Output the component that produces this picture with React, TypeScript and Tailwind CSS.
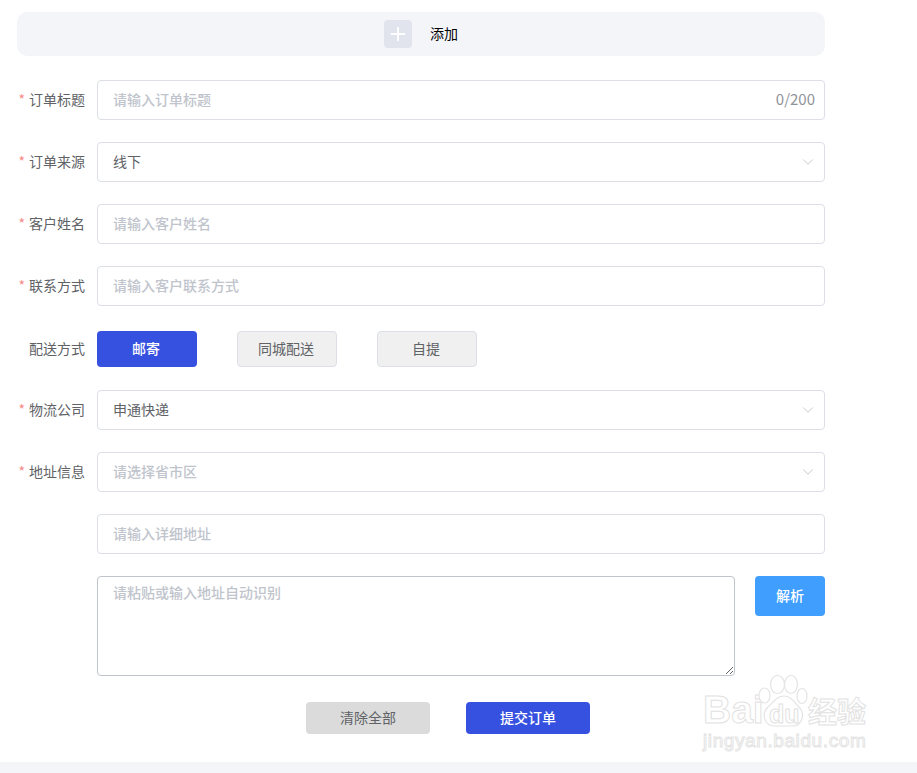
import { ChevronDown, Plus } from "lucide-react";
import type { ReactNode } from "react";

const cjk = "font-['Microsoft_YaHei','Noto_Sans_CJK_SC','Noto_Sans',sans-serif]";

function Row({ label, required, className, children }: { label?: string; required?: boolean; className?: string; children: ReactNode }) {
    return (
        <div className={`flex items-center ${className ?? ""}`}>
            <label className="w-[68px] shrink-0 text-right text-sm leading-5 text-[#606266] mr-3 pb-0.5">
                {required && <span className="text-[#f78989] mr-1">*</span>}
                {label}
            </label>
            {children}
        </div>
    );
}

function TextInput({ placeholder, suffix }: { placeholder: string; suffix?: string }) {
    return (
        <div className="flex-1 h-10 flex items-center rounded border border-[#dcdfe6] bg-white pl-[15px] pr-[9px] pb-0.5">
            <input
                placeholder={placeholder}
                className="flex-1 min-w-0 bg-transparent text-sm text-[#606266] outline-none placeholder:text-[#c0c4cc] placeholder:font-medium"
            />
            {suffix && <span className="text-[15px] text-[#909399]">{suffix}</span>}
        </div>
    );
}

function SelectBox({ value, placeholder }: { value?: string; placeholder?: string }) {
    return (
        <div className="flex-1 h-10 flex items-center justify-between rounded border border-[#dcdfe6] bg-white pl-[15px] pr-[7px]">
            <span className={`text-sm pb-0.5 ${value ? "text-[#606266]" : "font-medium text-[#c0c4cc]"}`}>{value ?? placeholder}</span>
            <ChevronDown className="w-[18px] h-[18px] text-[#c0c4cc]" strokeWidth={1.2} />
        </div>
    );
}

function Watermark() {
    return (
        <div className="absolute left-[702px] top-[672px] w-[170px] h-[82px] select-none pointer-events-none">
            <span className="absolute left-[1px] top-[15px] text-[39px] leading-[46px] font-bold font-['Liberation_Sans',sans-serif] text-white [-webkit-text-stroke:1px_#e2e2e2]">Bai</span>
            <svg className="absolute left-[56px] top-[3px]" width="52" height="54" viewBox="0 0 52 54" fill="white" stroke="#e4e4e4" strokeWidth="1.2">
                <ellipse cx="19.5" cy="9.5" rx="7" ry="9" />
                <ellipse cx="33" cy="9.5" rx="6.5" ry="9" />
                <ellipse cx="6.5" cy="20.5" rx="5.5" ry="7.5" />
                <ellipse cx="44" cy="21" rx="5" ry="7.5" />
                <path d="M26 21c7 0 10 6 15 11 6 6 4 19-7 19H17C6 51 3 39 10 32c6-5 8-11 16-11z" />
            </svg>
            <span className="absolute left-[67px] top-[28px] text-[25px] leading-[28px] font-bold font-['Liberation_Sans',sans-serif] text-white [-webkit-text-stroke:1px_#e2e2e2]">du</span>
            <span className={`absolute left-[106px] top-[20px] text-[29px] leading-[36px] font-bold text-white [-webkit-text-stroke:1px_#e2e2e2] ${cjk}`}>经验</span>
            <span className="absolute left-[1px] top-[57px] text-[19px] leading-6 font-['Liberation_Sans',sans-serif] text-white [-webkit-text-stroke:1px_#e4e4e4] tracking-[0.6px] whitespace-nowrap">jingyan.baidu.com</span>
        </div>
    );
}

export default function App() {
    const methods = ["邮寄", "同城配送", "自提"];

    return (
        <div className={`relative w-[917px] h-[773px] overflow-hidden bg-white flex flex-col ${cjk}`}>
            <div className="w-[808px] ml-[17px] mt-3 flex-1">
                {/* Add bar */}
                <div className="h-11 rounded-[10px] bg-[#f4f5f9] flex items-center justify-center gap-[18px]">
                    <div className="w-7 h-7 rounded bg-[#e1e4ec] flex items-center justify-center">
                        <Plus className="w-[22px] h-[22px] text-white" strokeWidth={2} />
                    </div>
                    <span className="text-sm text-black pb-0.5">添加</span>
                </div>

                <Row label="订单标题" required className="mt-6">
                    <TextInput placeholder="请输入订单标题" suffix="0/200" />
                </Row>
                <Row label="订单来源" required className="mt-[22px]">
                    <SelectBox value="线下" />
                </Row>
                <Row label="客户姓名" required className="mt-[22px]">
                    <TextInput placeholder="请输入客户姓名" />
                </Row>
                <Row label="联系方式" required className="mt-[22px]">
                    <TextInput placeholder="请输入客户联系方式" />
                </Row>

                <Row label="配送方式" className="mt-[25px]">
                    <div className="flex gap-10">
                        {methods.map((m, i) => (
                            <button
                                key={m}
                                className={
                                    i === 0
                                        ? "w-[100px] h-9 rounded bg-[#3650e0] pb-0.5 pr-0.5 text-sm font-medium text-white"
                                        : "w-[100px] h-9 rounded border border-[#dcdfe6] bg-[#f0f0f0] pb-0.5 pr-0.5 text-sm text-[#606266]"
                                }
                            >
                                {m}
                            </button>
                        ))}
                    </div>
                </Row>

                <Row label="物流公司" required className="mt-[23px]">
                    <SelectBox value="申通快递" />
                </Row>
                <Row label="地址信息" required className="mt-[22px]">
                    <SelectBox placeholder="请选择省市区" />
                </Row>
                <Row className="mt-[22px]">
                    <TextInput placeholder="请输入详细地址" />
                </Row>

                <div className="flex items-start mt-[22px] ml-20">
                    <textarea
                        placeholder="请粘贴或输入地址自动识别"
                        className="w-[638px] h-[100px] rounded border border-[#c0c4cc] bg-white px-[15px] py-[5px] text-sm leading-5 text-[#606266] outline-none placeholder:text-[#c0c4cc] placeholder:font-medium"
                    />
                    <button className="ml-5 w-[70px] h-10 rounded bg-[#409eff] pb-0.5 text-sm font-medium text-white">解析</button>
                </div>

                <div className="flex gap-9 mt-[26px] ml-[289px]">
                    <button className="w-[124px] h-8 rounded bg-[#dbdbdb] pb-0.5 text-sm text-[#606266]">清除全部</button>
                    <button className="w-[124px] h-8 rounded bg-[#3650e0] pb-0.5 text-sm font-medium text-white">提交订单</button>
                </div>
            </div>

            <div className="h-[11px] bg-[#f4f5f9]" />
            <Watermark />
        </div>
    );
}
